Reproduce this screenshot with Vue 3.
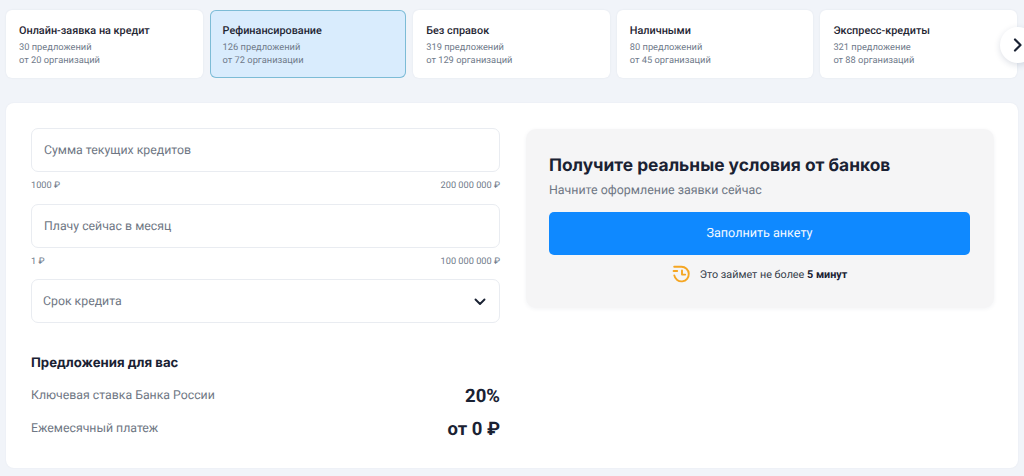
<script setup>
const tabs = [
  { title: 'Онлайн-заявка на кредит', a: '30 предложений', b: 'от 20 организаций' },
  { title: 'Рефинансирование', a: '126 предложений', b: 'от 72 организации', active: true },
  { title: 'Без справок', a: '319 предложений', b: 'от 129 организаций' },
  { title: 'Наличными', a: '80 предложений', b: 'от 45 организаций' },
  { title: 'Экспресс-кредиты', a: '321 предложение', b: 'от 88 организаций' }
]
const fields = [
  { label: 'Сумма текущих кредитов', min: '1000 ₽', max: '200 000 000 ₽' },
  { label: 'Плачу сейчас в месяц', min: '1 ₽', max: '100 000 000 ₽' }
]
</script>

<template>
  <div class="page">
    <div class="tabs">
      <div v-for="t in tabs" :key="t.title" class="tab" :class="{ active: t.active }">
        <div class="tab-title">{{ t.title }}</div>
        <div class="tab-sub">{{ t.a }}</div>
        <div class="tab-sub">{{ t.b }}</div>
      </div>
      <div class="next">
        <svg width="12" height="14" viewBox="0 0 12 14" fill="none">
          <path d="M3 1.5 8.5 7 3 12.5" stroke="#1a2233" stroke-width="2.2" stroke-linecap="round" stroke-linejoin="round" />
        </svg>
      </div>
    </div>

    <div class="panel">
      <div class="left">
        <div v-for="f in fields" :key="f.label" class="field">
          <div class="box">{{ f.label }}</div>
          <div class="hints"><span>{{ f.min }}</span><span>{{ f.max }}</span></div>
        </div>
        <div class="box select">
          <span>Срок кредита</span>
          <svg width="12" height="8" viewBox="0 0 12 8" fill="none">
            <path d="M1.5 1.5 6 6l4.5-4.5" stroke="#1a2233" stroke-width="1.9" stroke-linecap="round" stroke-linejoin="round" />
          </svg>
        </div>
        <h3 class="offers">Предложения для вас</h3>
        <div class="row first"><span>Ключевая ставка Банка России</span><b>20%</b></div>
        <div class="row"><span>Ежемесячный платеж</span><b>от 0 ₽</b></div>
      </div>

      <div class="promo">
        <h2>Получите реальные условия от банков</h2>
        <p>Начните оформление заявки сейчас</p>
        <div class="btn">Заполнить анкету</div>
        <div class="note">
          <svg width="19" height="18" viewBox="0 0 19 18" fill="none" stroke="#f5a623" stroke-width="1.9" stroke-linecap="round" stroke-linejoin="round">
            <path d="M2.2 1.8H9.5a7.3 7.3 0 1 1-7.2 8.6" />
            <path d="M1.6 6h3.6" />
            <path d="M10 5.5V9.6H13.2" />
          </svg>
          <span>Это займет не более <b>5 минут</b></span>
        </div>
      </div>
    </div>
  </div>
</template>

<style>
html, body { margin: 0; background: #f1f4f9; }
</style>

<style scoped>
.page {
  width: 1024px;
  height: 476px;
  overflow: hidden;
  box-sizing: border-box;
  padding: 10px 6px 0;
  background: #f1f4f9;
  font-family: Roboto, "Liberation Sans", sans-serif;
  color: #1a2233;
  text-rendering: geometricPrecision;
}
.tabs {
  position: relative;
  display: flex;
  gap: 7px;
  width: 1011px;
}
.tab {
  flex: 1 1 0;
  height: 68px;
  box-sizing: border-box;
  padding: 14px 12px 0 13px;
  background: #fff;
  border-radius: 6px;
  box-shadow: 0 0 2px rgba(30, 50, 90, 0.08);
}
.tab.active {
  background: #d9ecfd;
  box-shadow: inset 0 0 0 1px #7dbcd6;
}
.tab-title {
  font-size: 10.85px;
  font-weight: 500;
  line-height: 14px;
  margin-bottom: 4px;
  color: #1f2633;
}
.tab-sub {
  font-size: 9.3px;
  line-height: 12.5px;
  color: #6f7a8a;
}
.next {
  position: absolute;
  right: -19px;
  top: 17px;
  width: 36px;
  height: 36px;
  border-radius: 50%;
  background: #fff;
  box-shadow: 0 2px 6px rgba(30, 50, 90, 0.15);
  display: flex;
  align-items: center;
  justify-content: flex-start;
  padding-left: 12px;
  box-sizing: border-box;
}
.panel {
  margin-top: 25px;
  width: 1012px;
  height: 365px;
  box-sizing: border-box;
  padding: 25px 24px 0 25px;
  background: #fff;
  border-radius: 8px;
  display: flex;
  gap: 26px;
  align-items: flex-start;
  box-shadow: 0 0 2px rgba(30, 50, 90, 0.06);
}
.left { width: 469px; flex: none; }
.box {
  height: 44px;
  box-sizing: border-box;
  border: 1px solid #e9ecf1;
  border-radius: 7px;
  padding: 1px 12px 0;
  display: flex;
  align-items: center;
  font-size: 12.3px;
  color: #6f7784;
}
.hints {
  display: flex;
  justify-content: space-between;
  height: 32px;
  padding-top: 8px;
  box-sizing: border-box;
  font-size: 9.2px;
  line-height: 12px;
  color: #6f7a8a;
}
.field + .field .hints { height: 31px; }
.select {
  justify-content: space-between;
  padding: 1px 13px 0 11px;
}
.offers {
  margin: 31px 0 0;
  font-family: Inter, "Liberation Sans", sans-serif;
  font-size: 13.2px;
  font-weight: 700;
  line-height: 18px;
  color: #1a2233;
}
.row {
  display: flex;
  justify-content: space-between;
  align-items: center;
  height: 24px;
  margin-top: 9px;
  font-size: 12.3px;
  color: #6f7784;
}
.row.first { margin-top: 12px; }
.row b {
  font-family: Roboto, "Liberation Sans", sans-serif;
  font-size: 18.5px;
  font-weight: 700;
  color: #1a2233;
}
.promo {
  width: 468px;
  height: 179px;
  box-sizing: border-box;
  padding: 26px 24px 0 23px;
  margin-top: 1px;
  background: #f5f5f6;
  border-radius: 10px;
  box-shadow: 0 1px 4px rgba(30, 50, 90, 0.06);
}
.promo h2 {
  margin: 0;
  font-family: Inter, "Liberation Sans", sans-serif;
  font-size: 17.35px;
  font-weight: 700;
  line-height: 22px;
  color: #1a2233;
}
.promo p {
  margin: 6px 0 0;
  font-size: 12.4px;
  line-height: 16px;
  color: #6f7784;
}
.btn {
  margin-top: 13px;
  height: 43px;
  border-radius: 5px;
  background: #0f89ff;
  color: #f4f9ff;
  display: flex;
  align-items: center;
  justify-content: center;
  font-size: 12.6px;
  font-weight: 400;
}
.note {
  margin-top: 10px;
  display: flex;
  align-items: center;
  justify-content: center;
  gap: 9px;
  font-size: 10.8px;
  color: #333b48;
}
.note b { font-weight: 700; color: #1a2233; }
</style>
